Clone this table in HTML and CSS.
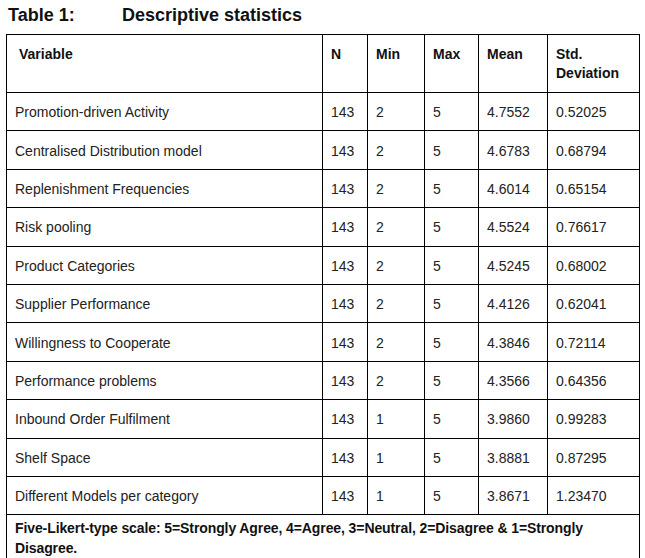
FILE: index.html
```html
<!DOCTYPE html>
<html>
<head>
<meta charset="utf-8">
<link rel="stylesheet" href="styles.css">
</head>
<body>
<h1 class="title"><span class="title-num">Table 1:</span><span>Descriptive statistics</span></h1>
<table class="stats">
  <colgroup>
    <col class="c-var"><col class="c-n"><col class="c-min"><col class="c-max"><col class="c-mean"><col class="c-sd">
  </colgroup>
  <thead>
    <tr class="head">
      <th class="h-var">Variable</th><th>N</th><th>Min</th><th>Max</th><th>Mean</th><th>Std.<br>Deviation</th>
    </tr>
  </thead>
  <tbody>
    <tr><td>Promotion-driven Activity</td><td>143</td><td>2</td><td>5</td><td>4.7552</td><td>0.52025</td></tr>
    <tr><td>Centralised Distribution model</td><td>143</td><td>2</td><td>5</td><td>4.6783</td><td>0.68794</td></tr>
    <tr><td>Replenishment Frequencies</td><td>143</td><td>2</td><td>5</td><td>4.6014</td><td>0.65154</td></tr>
    <tr><td>Risk pooling</td><td>143</td><td>2</td><td>5</td><td>4.5524</td><td>0.76617</td></tr>
    <tr><td>Product Categories</td><td>143</td><td>2</td><td>5</td><td>4.5245</td><td>0.68002</td></tr>
    <tr><td>Supplier Performance</td><td>143</td><td>2</td><td>5</td><td>4.4126</td><td>0.62041</td></tr>
    <tr><td>Willingness to Cooperate</td><td>143</td><td>2</td><td>5</td><td>4.3846</td><td>0.72114</td></tr>
    <tr><td>Performance problems</td><td>143</td><td>2</td><td>5</td><td>4.3566</td><td>0.64356</td></tr>
    <tr><td>Inbound Order Fulfilment</td><td>143</td><td>1</td><td>5</td><td>3.9860</td><td>0.99283</td></tr>
    <tr><td>Shelf Space</td><td>143</td><td>1</td><td>5</td><td>3.8881</td><td>0.87295</td></tr>
    <tr><td>Different Models per category</td><td>143</td><td>1</td><td>5</td><td>3.8671</td><td>1.23470</td></tr>
    <tr class="foot"><td colspan="6">Five-Likert-type scale: 5=Strongly Agree, 4=Agree, 3=Neutral, 2=Disagree &amp; 1=Strongly Disagree.</td></tr>
  </tbody>
</table>
</body>
</html>
```

FILE: styles.css
```css
html, body {
  margin: 0;
  padding: 0;
  background: #fff;
}
body {
  font-family: "Liberation Sans", Arial, sans-serif;
  color: #222;
  width: 645px;
  height: 558px;
  overflow: hidden;
}
.title {
  margin: 0;
  padding: 5px 0 0 8px;
  height: 29px;
  box-sizing: border-box;
  font-size: 18px;
  font-weight: bold;
  line-height: 20px;
  color: #111;
}
.title-num {
  display: inline-block;
  width: 114px;
}
.stats {
  margin-left: 6px;
  margin-top: 5px;
  border-collapse: collapse;
  table-layout: fixed;
  width: 633px;
  font-size: 14px;
}
.c-var { width: 316px; }
.c-n { width: 45px; }
.c-min { width: 57px; }
.c-max { width: 54px; }
.c-mean { width: 69px; }
.c-sd { width: 92px; }
.stats th, .stats td {
  border: 1px solid #000;
  padding: 0 4px 0 8px;
  text-align: left;
}
.stats th {
  vertical-align: top;
  font-weight: bold;
  height: 58px;
  box-sizing: border-box;
  padding-top: 10px;
  line-height: 19px;
  color: #111;
}
.stats th.h-var {
  padding-left: 12px;
}
.stats td {
  height: 38.4px;
  box-sizing: border-box;
  vertical-align: middle;
  line-height: 18px;
  padding-top: 1px;
}
.stats .foot td {
  font-weight: bold;
  height: 50px;
  vertical-align: top;
  padding-top: 3px;
  line-height: 20px;
  padding-right: 40px;
  letter-spacing: -0.1px;
  color: #111;
}
```
